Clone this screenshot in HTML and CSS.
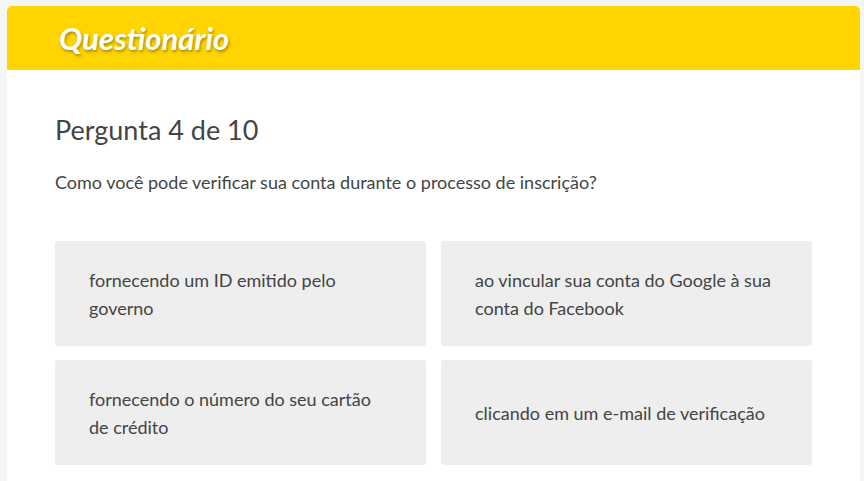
FILE: index.html
```html
<!DOCTYPE html>
<html lang="pt">
<head>
<meta charset="utf-8">
<link rel="stylesheet" href="styles.css">
</head>
<body>
<div class="card">
  <header class="card-header">
    <h1 class="title">Questionário</h1>
  </header>
  <main class="card-body">
    <h2 class="question-count">Pergunta 4 de 10</h2>
    <p class="question">Como você pode verificar sua conta durante o processo de inscrição?</p>
    <div class="options">
      <div class="option">fornecendo um ID emitido pelo governo</div>
      <div class="option">ao vincular sua conta do Google à sua conta do Facebook</div>
      <div class="option">fornecendo o número do seu cartão de crédito</div>
      <div class="option">clicando em um e-mail de verificação</div>
    </div>
  </main>
</div>
</body>
</html>
```
FILE: styles.css
```css
html, body {
  margin: 0;
  padding: 0;
}
body {
  background: #f5f5f5;
  font-family: Lato, "Open Sans", sans-serif;
  color: #444;
  padding: 6px 4px 0 7px;
}
.card {
  background: #fff;
  border-radius: 5px 5px 0 0;
  overflow: hidden;
  width: 853px;
}
.card-header {
  background: #ffd400;
  height: 64px;
  display: flex;
  align-items: center;
  padding-left: 52px;
}
.title {
  margin: 0;
  color: #fff;
  font-style: italic;
  font-weight: 700;
  font-size: 31px;
  text-shadow: 1px 2px 3px rgba(0,0,0,0.35);
}
.card-body {
  padding: 42px 48px 40px 48px;
}
.question-count {
  margin: 0;
  font-weight: 400;
  font-size: 27px;
  line-height: 36px;
  color: #444;
}
.question {
  margin: 20px 0 0 0;
  font-size: 18px;
  line-height: 28px;
}
.options {
  margin-top: 45px;
  display: grid;
  grid-template-columns: 1fr 1fr;
  column-gap: 15px;
  row-gap: 14px;
}
.option {
  background: #eee;
  border-radius: 3px;
  height: 105px;
  box-sizing: border-box;
  padding: 0 40px 0 34px;
  display: flex;
  align-items: center;
  font-size: 18px;
  line-height: 28px;
}
```
